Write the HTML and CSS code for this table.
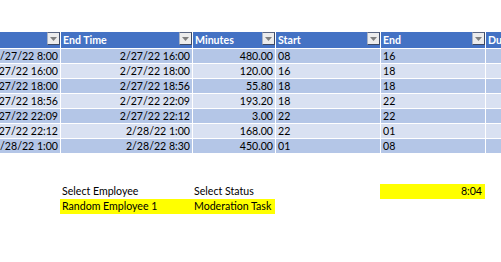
FILE: index.html
```html
<!DOCTYPE html>
<html>
<head>
<meta charset="utf-8">
<link rel="stylesheet" href="styles.css">
</head>
<body>
<div class="sheet">
  <div class="table">
    <div class="hd hd-first"><span class="dd"><svg width="7" height="4" viewBox="0 0 7 4"><path d="M0 0H7L3.5 4Z" fill="#7f7f7f"/></svg></span></div>
    <div class="hd"><span class="ht">End Time</span><span class="dd"><svg width="7" height="4" viewBox="0 0 7 4"><path d="M0 0H7L3.5 4Z" fill="#7f7f7f"/></svg></span></div>
    <div class="hd"><span class="ht">Minutes</span><span class="dd"><svg width="7" height="4" viewBox="0 0 7 4"><path d="M0 0H7L3.5 4Z" fill="#7f7f7f"/></svg></span></div>
    <div class="hd"><span class="ht">Start</span><span class="dd"><svg width="7" height="4" viewBox="0 0 7 4"><path d="M0 0H7L3.5 4Z" fill="#7f7f7f"/></svg></span></div>
    <div class="hd"><span class="ht">End</span><span class="dd"><svg width="7" height="4" viewBox="0 0 7 4"><path d="M0 0H7L3.5 4Z" fill="#7f7f7f"/></svg></span></div>
    <div class="hd"><span class="ht">Du</span></div>

    <div class="c r clip dark"><span>2/27/22 8:00</span></div><div class="c r dark">2/27/22 16:00</div><div class="c r dark">480.00</div><div class="c dark">08</div><div class="c dark">16</div><div class="c dark"></div>
    <div class="c r clip light"><span>2/27/22 16:00</span></div><div class="c r light">2/27/22 18:00</div><div class="c r light">120.00</div><div class="c light">16</div><div class="c light">18</div><div class="c light"></div>
    <div class="c r clip dark"><span>2/27/22 18:00</span></div><div class="c r dark">2/27/22 18:56</div><div class="c r dark">55.80</div><div class="c dark">18</div><div class="c dark">18</div><div class="c dark"></div>
    <div class="c r clip light"><span>2/27/22 18:56</span></div><div class="c r light">2/27/22 22:09</div><div class="c r light">193.20</div><div class="c light">18</div><div class="c light">22</div><div class="c light"></div>
    <div class="c r clip dark"><span>2/27/22 22:09</span></div><div class="c r dark">2/27/22 22:12</div><div class="c r dark">3.00</div><div class="c dark">22</div><div class="c dark">22</div><div class="c dark"></div>
    <div class="c r clip light"><span>2/27/22 22:12</span></div><div class="c r light">2/28/22 1:00</div><div class="c r light">168.00</div><div class="c light">22</div><div class="c light">01</div><div class="c light"></div>
    <div class="c r clip dark"><span>2/28/22 1:00</span></div><div class="c r dark">2/28/22 8:30</div><div class="c r dark">450.00</div><div class="c dark">01</div><div class="c dark">08</div><div class="c dark"></div>
  </div>

  <div class="panel">
    <div class="p sel-emp">Select Employee</div>
    <div class="p sel-status">Select Status</div>
    <div class="p r yellow time">8:04</div>
    <div class="p yellow emp">Random Employee 1</div>
    <div class="p yellow status">Moderation Task</div>
  </div>
</div>
</body>
</html>
```
FILE: styles.css
```css
html, body {
  margin: 0;
  padding: 0;
  background: #ffffff;
}

body {
  font-family: "Lato", "Liberation Sans", sans-serif;
  font-size: 10.6px;
  color: #000000;
}

.sheet {
  padding-top: 32px;
  width: 501px;
  overflow: hidden;
}

.table {
  display: grid;
  grid-template-columns: 60px 131px 82px 104px 104px 40px;
  grid-template-rows: 16px repeat(7, 14px);
  column-gap: 1px;
  row-gap: 1px;
}

.hd {
  background: #4472c4;
  color: #ffffff;
  font-weight: 700;
  display: flex;
  align-items: flex-start;
  justify-content: space-between;
  line-height: 16px;
  padding-left: 2px;
  min-width: 0;
  white-space: nowrap;
  overflow: hidden;
}

.hd-first {
  justify-content: flex-end;
}

.dd {
  width: 11px;
  height: 11px;
  background: #ececec;
  border: 1px solid #3d4a66;
  border-left-color: #a9b3c6;
  border-top-color: #5a6682;
  display: flex;
  align-items: center;
  justify-content: center;
  flex: none;
}

.dd svg {
  display: block;
}

.c {
  line-height: 14px;
  padding: 0 2px;
  white-space: nowrap;
  min-width: 0;
  overflow: hidden;
}

.c.r {
  text-align: right;
}

.c.clip {
  display: flex;
  justify-content: flex-end;
}

.c.clip span {
  flex: none;
}

.dark {
  background: #b4c6e7;
}

.light {
  background: #d9e1f2;
}

.panel {
  display: grid;
  grid-template-columns: 60px 132px 83px 105px 105px 16px;
  grid-template-rows: repeat(2, 15px);
  margin-top: 31px;
}

.p {
  line-height: 15px;
  padding: 0 2px;
  white-space: nowrap;
}

.p.r {
  text-align: right;
  padding-right: 3px;
}

.yellow {
  background: #ffff00;
}

.sel-emp {
  grid-column: 2;
  grid-row: 1;
}

.sel-status {
  grid-column: 3 / span 2;
  grid-row: 1;
}

.time {
  grid-column: 5;
  grid-row: 1;
}

.emp {
  grid-column: 2;
  grid-row: 2;
}

.status {
  grid-column: 3;
  grid-row: 2;
}
```
